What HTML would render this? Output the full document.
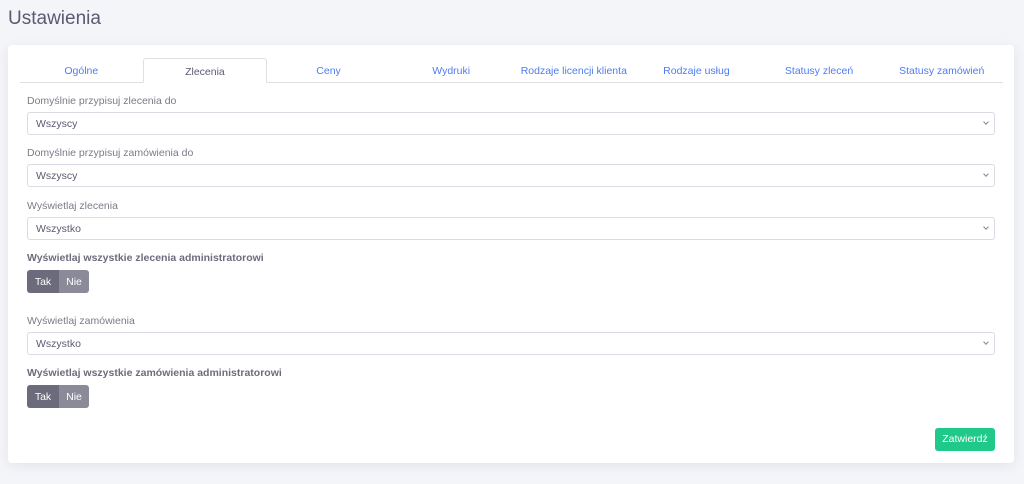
<!DOCTYPE html>
<html><head><style>
body{margin:0;width:1024px;height:484px;background:#f4f5f9;font-family:"Liberation Sans",sans-serif;position:relative;overflow:hidden;color:#6e6b7b}
h1{position:absolute;left:8px;top:8px;margin:0;font-size:19px;font-weight:normal;color:#5e5873}
.card{position:absolute;left:8px;top:45px;width:1006px;height:418px;background:#fff;border-radius:4px;box-shadow:0 3px 12px rgba(34,41,47,.08)}
.tabs{position:absolute;left:12px;top:13px;width:983px;height:24px;border-bottom:1px solid #dfe0e6;display:flex}
.tab{flex:1;text-align:center;font-size:10.5px;line-height:26px;color:#4e7cf0}
.tab.a{color:#5e5873;background:#fff;border:1px solid #dfe0e6;border-bottom:1px solid #fff;border-radius:3px 3px 0 0;height:25px;box-sizing:border-box;margin-bottom:-1px}
.lbl{position:absolute;left:19px;font-size:10.5px;color:#7c7a87}
.lbl.b{font-weight:bold;color:#6e6b7b}
.sel{position:absolute;left:19px;width:968px;height:23px;box-sizing:border-box;border:1px solid #dcdbe3;border-radius:3px;font-size:10.5px;line-height:22px;padding-left:8px;color:#5e5873}
.sel:after{content:"";position:absolute;right:6px;top:7px;width:3px;height:3px;border-right:1px solid #888;border-bottom:1px solid #888;transform:rotate(45deg)}
.tg{position:absolute;left:19px;width:62px;height:23px;border-radius:3px;overflow:hidden;display:flex;font-size:10.5px;color:#fff;line-height:24px}
.tg span:first-child{width:32px;background:#6c6b7b;text-align:center}
.tg span:last-child{flex:1;background:#8b8a99;text-align:center}
.btn{position:absolute;left:927px;top:383px;width:60px;height:23px;background:#1fc98a;border-radius:3px;color:#fff;font-size:10.5px;line-height:23px;text-align:center}
</style></head><body>
<h1>Ustawienia</h1>
<div class="card">
<div class="tabs"><div class="tab">Ogólne</div><div class="tab a">Zlecenia</div><div class="tab">Ceny</div><div class="tab">Wydruki</div><div class="tab">Rodzaje licencji klienta</div><div class="tab">Rodzaje usług</div><div class="tab">Statusy zleceń</div><div class="tab">Statusy zamówień</div></div>
<div class="lbl" style="top:50px">Domyślnie przypisuj zlecenia do</div>
<div class="sel" style="top:67px">Wszyscy</div>
<div class="lbl" style="top:102px">Domyślnie przypisuj zamówienia do</div>
<div class="sel" style="top:119px">Wszyscy</div>
<div class="lbl" style="top:155px">Wyświetlaj zlecenia</div>
<div class="sel" style="top:172px">Wszystko</div>
<div class="lbl b" style="top:207px">Wyświetlaj wszystkie zlecenia administratorowi</div>
<div class="tg" style="top:225px"><span>Tak</span><span>Nie</span></div>
<div class="lbl" style="top:270px">Wyświetlaj zamówienia</div>
<div class="sel" style="top:287px">Wszystko</div>
<div class="lbl b" style="top:322px">Wyświetlaj wszystkie zamówienia administratorowi</div>
<div class="tg" style="top:340px"><span>Tak</span><span>Nie</span></div>
<div class="btn">Zatwierdź</div>
</div>
</body></html>
